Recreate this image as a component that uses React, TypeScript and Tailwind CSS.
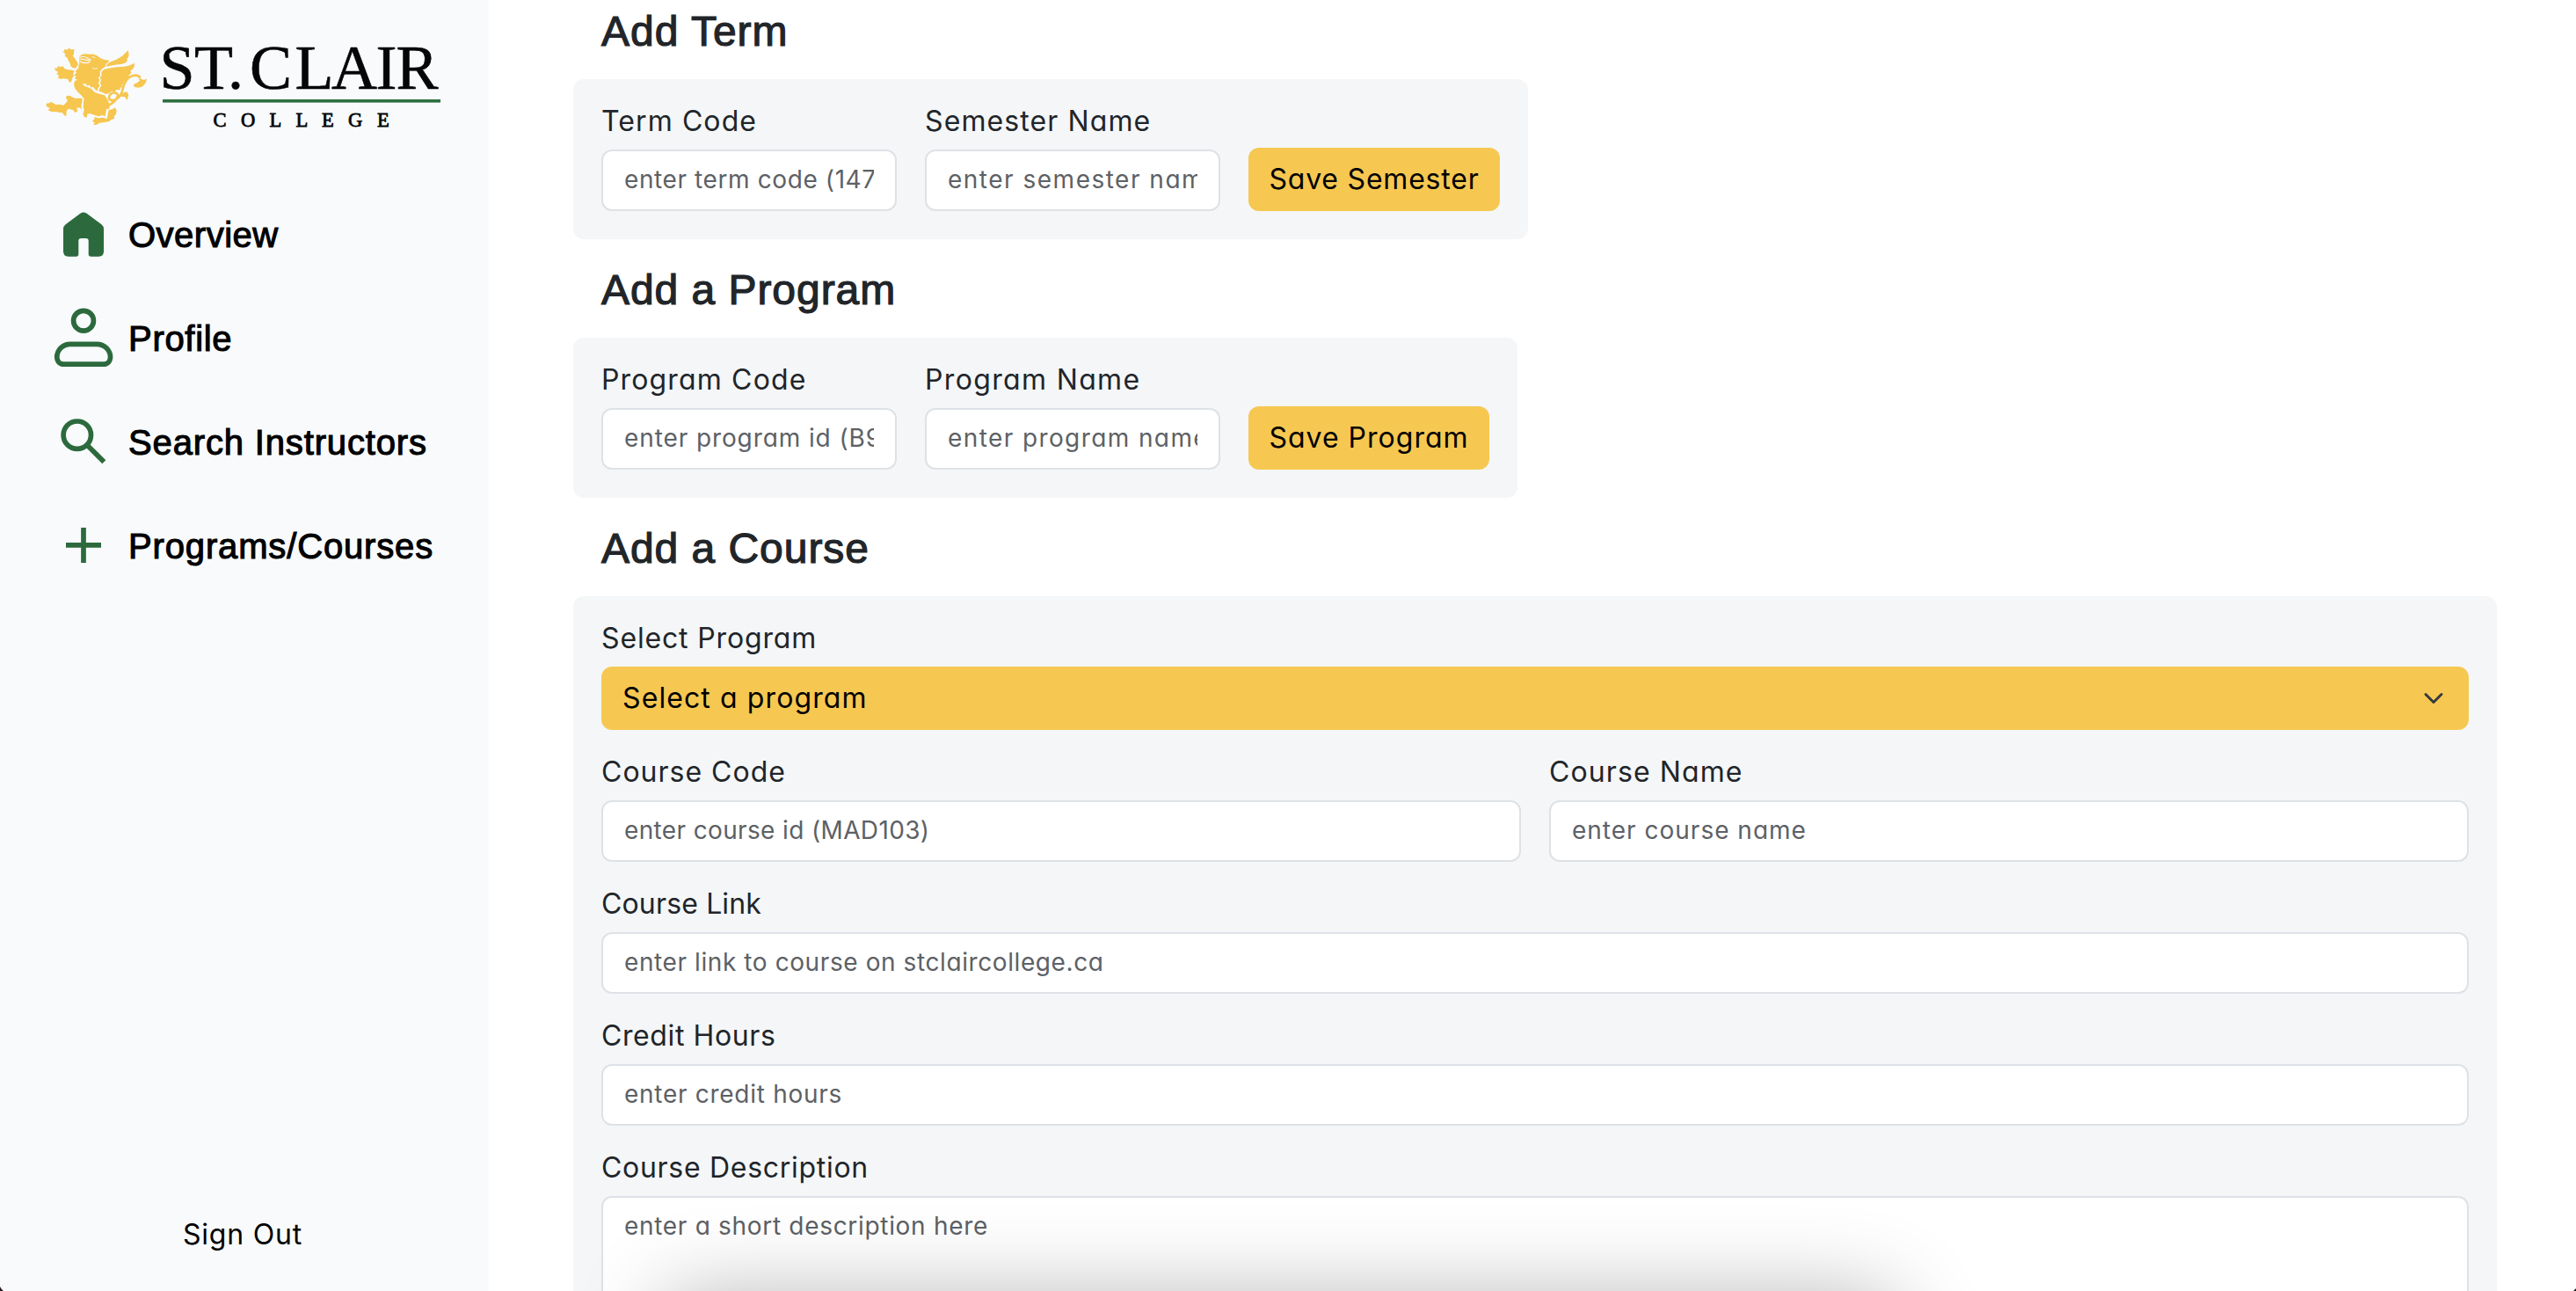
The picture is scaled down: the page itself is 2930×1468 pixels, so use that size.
import React from "react";

const INTER = "font-['Inter','Noto_Sans',sans-serif] [font-feature-settings:'cv11']";
const HELV = "font-['Liberation_Sans',Arial,sans-serif]";

function Griffin() {
  return (
    <g transform="translate(45 45) scale(0.33333)" fill="#f6c64f">
      {/* forelegs */}
      <path d="M78 40 L84 40 L85 32 L93 35 L101 29 L107 34 L118 33 L117 48 L114 56 L120 64 L128 76 L132 86 L126 92 L124 98 L112 96 L106 90 L104 80 L98 72 L96 64 L86 56 L88 49 Z" />
      <path d="M52 97 L60 98 L62 91 L72 93 L80 91 L86 100 L98 103 L112 104 L119 107 L114 118 L118 124 L110 132 L112 136 L106 146 L100 144 L98 136 L84 133 L70 134 L63 131 L66 122 L58 117 L64 110 L53 105 Z" />
      {/* head, beak and mane */}
      <path d="M136 60 Q140 50 158 49 L172 50 Q184 47 196 55 L208 64 L220 68 L238 71 L234 78 L226 83 L226 90 L220 96 Q208 102 206 112 L207 124 L200 130 L205 138 L200 150 L206 156 L200 166 L196 176 L190 170 L182 161 L176 164 L170 155 L162 158 L158 150 L146 152 L134 146 L124 143 L128 136 L120 134 L124 124 L118 122 L126 112 L122 108 L132 98 L134 88 L136 80 Z" />
      <path d="M138 60 Q158 55 168 66 M137 66 Q150 67 162 70 Q172 71 172 66 Q176 80 156 80 Q144 80 138 73" fill="none" stroke="#f8fafc" strokeWidth="3.5" />
      <path d="M180 97 Q188 103 198 97 M178 58 L190 62" fill="none" stroke="#f8fafc" strokeWidth="2.5" />
      {/* wings */}
      <path d="M302 37 L305 50 L303 60 L298 66 L300 72 L292 80 L278 84 L258 86 L240 90 L228 92 L230 84 L242 76 L262 68 L282 56 Z" />
      <path d="M324 80 L323 92 L317 102 L310 106 L313 114 L304 122 L306 128 L296 134 L298 140 L286 144 L290 152 L280 154 L284 162 L274 164 L276 172 L262 172 L256 178 L246 176 L236 184 L226 186 L214 180 L202 176 L206 164 L212 156 L206 150 L210 138 L206 130 L212 122 L211 112 Q213 104 222 101 L242 97 L264 94 L290 92 L308 88 Z" />
      {/* body */}
      <path d="M120 142 Q128 135 136 142 Q146 154 156 160 Q176 164 188 180 Q204 186 222 190 Q230 200 236 214 L240 226 L236 238 L228 236 L226 250 L224 262 L214 258 L202 262 L188 258 L172 252 L163 254 L161 266 L153 264 L148 254 L152 242 L149 228 L150 214 L152 202 L142 190 L128 176 Q112 158 120 142 Z" />
      {/* hind legs */}
      <path d="M22 218 L34 217 L38 212 L46 216 L56 222 L68 221 L82 224 L92 214 L96 206 L90 200 L92 192 L104 191 L110 196 L122 200 L136 200 L146 200 L145 212 L142 226 L144 238 L136 232 L126 234 L130 244 L122 250 L114 240 L104 238 L98 236 L92 244 L91 262 L84 258 L78 250 L66 248 L54 246 L40 246 L28 240 L36 234 L24 228 Z" />
      <path d="M236 240 L248 238 L258 232 L263 242 L261 254 L254 262 L256 270 L246 272 L236 280 L222 282 L206 284 L194 290 L184 292 L188 284 L180 278 L188 270 L186 264 L200 268 L216 266 L230 270 Z" />
      {/* tail */}
      <path d="M232 226 Q262 212 268 190 Q262 178 248 182 Q234 190 238 204 Q252 212 266 200 Q280 190 284 168 Q292 132 316 124 Q334 118 344 130" fill="none" stroke="#f6c64f" strokeWidth="8" />
      <path d="M278 184 L298 178 L304 190 L298 208 L292 196 L280 194 L270 196 Z" />
      <path d="M336 126 L346 134 L356 138 L366 134 L362 148 L352 160 L338 164 L324 162 L320 154 L332 148 L342 140 Z" />
    </g>
  );
}

function Logo() {
  return (
    <svg width="556" height="160" viewBox="0 0 556 160" className="block shrink-0">
      <Griffin />
      <g fontFamily="'Liberation Serif', serif" fill="#050608">
        <text y="101" fontSize="72" x="181.5 221 259 284 335.5 377 427.5 450.5" stroke="#050608" strokeWidth="0.6">
          ST.CLAIR
        </text>
        <text y="143.5" fontSize="22.5" x="242.5 274 306.5 336.5 366 396 429" stroke="#050608" strokeWidth="0.8">
          COLLEGE
        </text>
      </g>
      <rect x="185" y="113" width="316" height="3.6" fill="#2f7040" />
    </svg>
  );
}

const icons = {
  home: (
    <svg width="80" height="80" viewBox="57 227 80 80" fill="#2c6a3d">
      <path d="M91.3 242.8 Q95 240.2 98.700 242.800 L115.500 255.200 Q118 257.200 118 260.500 V286 Q118 291.700 112.300 291.700 H103.500 Q100.700 291.700 100.700 289 V274 Q100.700 271 97.800 271 H92.200 Q89.300 271 89.300 274 V289 Q89.300 291.700 86.500 291.700 H77.700 Q72 291.700 72 286 V260.500 Q72 257.200 74.500 255.200 Z" />
    </svg>
  ),
  person: (
    <svg width="80" height="80" viewBox="57 345 80 80" fill="none" stroke="#2c6a3d" strokeWidth="5.7">
      <circle cx="95" cy="364.7" r="11.4" />
      <path d="M80 391.300 H110 C119 391.300 125.500 398.500 125.500 406 C125.500 411 122 414.200 118 414.200 H72.500 C68 414.200 64.800 411 64.800 406 C64.800 398.500 71 391.300 80 391.300 Z" />
    </svg>
  ),
  search: (
    <svg width="80" height="80" viewBox="57 463 80 80" fill="none" stroke="#2c6a3d" strokeWidth="5.7">
      <circle cx="87.800" cy="494.700" r="15.700" />
      <path d="M98.900 505.900 L118.300 525.300" />
    </svg>
  ),
  plus: (
    <svg width="80" height="80" viewBox="57 581 80 80" fill="none" stroke="#2c6a3d" strokeWidth="5.7">
      <path d="M75 619.900 H115 M95 600 V640" />
    </svg>
  ),
};

const nav = [
  { label: "Overview", icon: icons.home, track: "tracking-[0.5px]" },
  { label: "Profile", icon: icons.person, track: "tracking-[0.7px]" },
  { label: "Search Instructors", icon: icons.search, track: "tracking-[0.85px]" },
  { label: "Programs/Courses", icon: icons.plus, track: "tracking-[0.85px]" },
];

function Heading({ text, track }: { text: string; track: string }) {
  return (
    <h2 className={`ml-8 mb-[25px] text-[48px] leading-[58px] text-[#212529] [-webkit-text-stroke:1.2px_#212529] ${HELV} ${track}`}>
      {text}
    </h2>
  );
}

function Label({ text, track }: { text: string; track: string }) {
  return <span className={`mb-[17px] block whitespace-nowrap text-[32px] leading-[31px] text-[#212529] ${track}`}>{text}</span>;
}

interface FieldProps {
  label: string;
  track: string;
  placeholder: string;
  ptrack: string;
  className?: string;
}

function Field({ label, track, placeholder, ptrack, className = "" }: FieldProps) {
  return (
    <label className={`block ${className}`}>
      <Label text={label} track={track} />
      <input
        placeholder={placeholder}
        className={`block h-[70px] w-full rounded-xl border-2 border-[#dee2e6] bg-white px-6 pb-[3px] text-[28px] placeholder:text-[#5d6165] placeholder:opacity-100 ${ptrack}`}
      />
    </label>
  );
}

function SaveButton({ text, className }: { text: string; className: string }) {
  return (
    <button className={`h-[72px] shrink-0 whitespace-nowrap rounded-xl bg-[#f6c851] text-[32px] text-black ${className}`}>
      {text}
    </button>
  );
}

export default function App() {
  return (
    <div className={`relative flex h-[1468px] w-[2930px] overflow-hidden bg-white ${INTER}`}>
      <aside className="flex w-[556px] shrink-0 flex-col bg-[#f8fafc]">
        <Logo />
        <nav className="mt-[67px] flex flex-col gap-[38px] pl-[57px]">
          {nav.map((n) => (
            <a key={n.label} className="flex h-[80px] items-center gap-[9px]">
              {n.icon}
              <span className={`whitespace-nowrap text-[40px] leading-[48px] text-black [-webkit-text-stroke:1.1px_#000] ${HELV} ${n.track}`}>
                {n.label}
              </span>
            </a>
          ))}
        </nav>
        <button className="mb-10 mt-auto pr-1 text-[32px] leading-[48px] tracking-[0.79px] text-black">Sign Out</button>
      </aside>

      <main className="ml-24 flex w-[2188px] shrink-0 flex-col items-start pt-[7px]">
        <Heading text="Add Term" track="tracking-[1px]" />
        <section className="mb-[29px] flex h-[182px] w-[1086px] shrink-0 items-end gap-8 rounded-xl bg-[#f4f6f8] p-8">
          <Field className="w-[336px]" label="Term Code" track="tracking-[1.1px]" placeholder="enter term code (1478)" ptrack="tracking-[0.6px]" />
          <Field className="w-[336px]" label="Semester Name" track="tracking-[1.1px]" placeholder="enter semester name" ptrack="tracking-[1.5px]" />
          <SaveButton text="Save Semester" className="w-[286px] tracking-[0.79px]" />
        </section>

        <Heading text="Add a Program" track="tracking-[0.95px]" />
        <section className="mb-[29px] flex h-[182px] w-[1074px] shrink-0 items-end gap-8 rounded-xl bg-[#f4f6f8] p-8">
          <Field className="w-[336px]" label="Program Code" track="tracking-[1.15px]" placeholder="enter program id (B999)" ptrack="tracking-[0.9px]" />
          <Field className="w-[336px]" label="Program Name" track="tracking-[1.35px]" placeholder="enter program name" ptrack="tracking-[1.4px]" />
          <SaveButton text="Save Program" className="w-[274px] tracking-[1px]" />
        </section>

        <Heading text="Add a Course" track="tracking-[0.95px]" />
        <section className="flex w-full shrink-0 flex-col gap-8 rounded-xl bg-[#f4f6f8] p-8">
          <div>
            <Label text="Select Program" track="tracking-[0.85px]" />
            <div className="flex h-[72px] items-center justify-between rounded-xl bg-[#f6c851] pl-6 pr-7">
              <span className="text-[32px] tracking-[1.1px] text-black">Select a program</span>
              <svg width="24" height="24" viewBox="0 0 16 16" fill="none" stroke="#343a40" strokeWidth="2" strokeLinecap="round" strokeLinejoin="round">
                <path d="m2 5 6 6 6-6" />
              </svg>
            </div>
          </div>
          <div className="flex gap-8">
            <Field className="flex-1" label="Course Code" track="tracking-[1px]" placeholder="enter course id (MAD103)" ptrack="tracking-[0.36px]" />
            <Field className="flex-1" label="Course Name" track="tracking-[1.1px]" placeholder="enter course name" ptrack="tracking-[1px]" />
          </div>
          <Field label="Course Link" track="tracking-[0.15px]" placeholder="enter link to course on stclaircollege.ca" ptrack="tracking-[0.59px]" />
          <Field label="Credit Hours" track="tracking-[0.6px]" placeholder="enter credit hours" ptrack="tracking-[0.72px]" />
          <label className="block">
            <Label text="Course Description" track="tracking-[0.71px]" />
            <textarea
              placeholder="enter a short description here"
              className="block h-[200px] w-full resize-none rounded-xl border-2 border-[#dee2e6] bg-white px-6 pt-[11px] text-[28px] leading-[42px] tracking-[0.69px] placeholder:text-[#5d6165] placeholder:opacity-100"
            />
          </label>
        </section>
      </main>

      {/* shadow rising from below the window edge */}
      <div className="pointer-events-none absolute left-[755px] top-[1476px] h-[200px] w-[1400px] rounded-3xl shadow-[0_0_100px_rgba(0,0,0,0.3)]" />
      {/* rounded window corners */}
      <svg className="absolute bottom-0 left-0" width="5" height="6" viewBox="0 0 5 6">
        <path d="M0 1 Q1.500 4 4 6 H0 Z" fill="#2b1f26" />
      </svg>
      <svg className="absolute bottom-0 right-0" width="3" height="3" viewBox="0 0 3 3">
        <path d="M3 0 V3 H0 Z" fill="#1a1a1a" />
      </svg>
    </div>
  );
}
